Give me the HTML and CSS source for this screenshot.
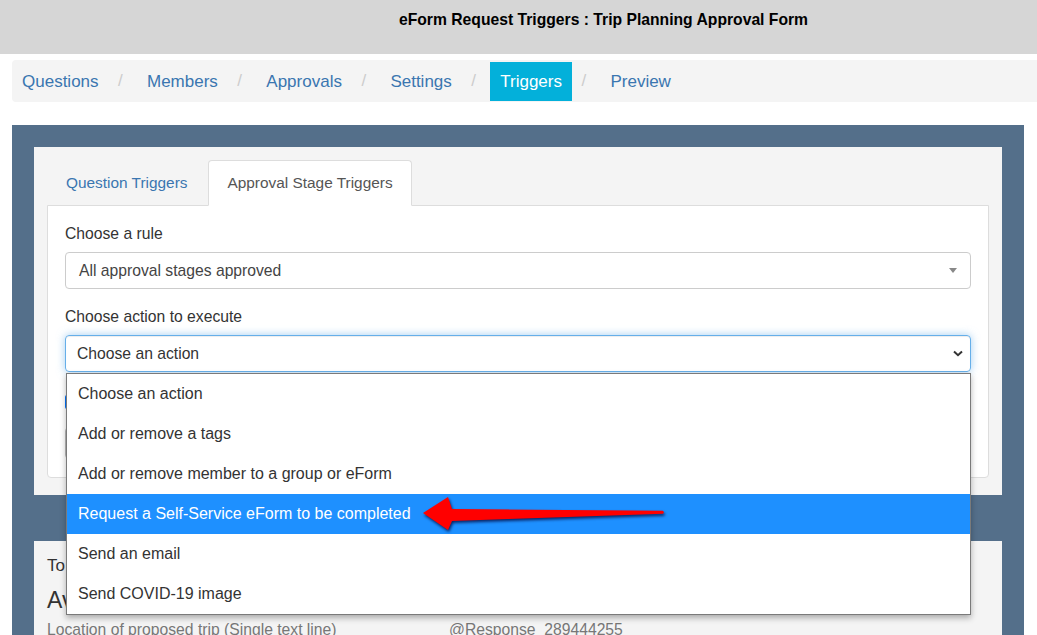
FILE: index.html
```html
<!DOCTYPE html>
<html lang="en">
<head>
    <meta charset="UTF-8">
    <meta name="viewport" content="width=device-width, initial-scale=1.0">
    <title>eForm Request Triggers</title>
    <link rel="stylesheet" href="styles.css">
</head>
<body>

    <header class="page-header">
        <h1 class="page-title">eForm Request Triggers : Trip Planning Approval Form</h1>
    </header>

    <ul class="crumbs">
        <li><a href="#">Questions</a></li>
        <li><a href="#">Members</a></li>
        <li><a href="#">Approvals</a></li>
        <li><a href="#">Settings</a></li>
        <li class="active"><a href="#">Triggers</a></li>
        <li><a href="#">Preview</a></li>
    </ul>

    <div class="board">
        <div class="card">
            <ul class="tabs">
                <li><a href="#">Question Triggers</a></li>
                <li class="active"><a href="#">Approval Stage Triggers</a></li>
            </ul>
            <div class="tab-pane">
                <div class="form-group">
                    <label>Choose a rule</label>
                    <div class="pick">
                        <span>All approval stages approved</span>
                        <span class="caret"></span>
                    </div>
                </div>
                <div class="form-group">
                    <label>Choose action to execute</label>
                    <div class="action-select">
                        <div class="select-box">
                            <span>Choose an action</span>
                            <svg class="chevron" width="10" height="7" viewBox="0 0 10 7">
                                <path d="M1 1.5 L5 5.2 L9 1.5" fill="none" stroke="#333" stroke-width="2"/>
                            </svg>
                        </div>
                        <ul class="options">
                            <li>Choose an action</li>
                            <li>Add or remove a tags</li>
                            <li>Add or remove member to a group or eForm</li>
                            <li class="hl">Request a Self-Service eForm to be completed
                                <svg class="pointer" width="250" height="40" viewBox="0 0 250 40">
                                    <polygon points="3,19 28,3 32,15 243,16.8 244,18.3 243,19.8 32,27 28,36" fill="#ff0000"/>
                                </svg>
                            </li>
                            <li>Send an email</li>
                            <li>Send COVID-19 image</li>
                        </ul>
                    </div>
                </div>
                <div class="check-row"><span class="checkbox"></span></div>
                <div class="input-box"></div>
            </div>
        </div>

        <div class="card lower">
            <p class="to">To</p>
            <h3 class="heading">Av</h3>
            <div class="field-row">
                <span>Location of proposed trip (Single text line)</span>
                <span>@Response_289444255</span>
            </div>
        </div>
    </div>

</body>
</html>
```

FILE: styles.css
```css
* {
    box-sizing: border-box;
}
body {
    margin: 0;
    font-family: "Liberation Sans", Arial, sans-serif;
    font-size: 15.7px;
    color: #333;
    height: 635px;
    overflow: hidden;
}
.page-header {
    background-color: #d6d6d6;
    height: 54px;
    padding: 11px 0 0 170px;
    text-align: center;
}
.page-title {
    margin: 0;
    font-size: 15.7px;
    font-weight: bold;
    line-height: 18px;
    color: #000;
}
.crumbs {
    display: flex;
    list-style: none;
    margin: 6px 0 0 12px;
    padding: 1px 0;
    height: 42px;
    background-color: #f4f4f4;
    border-radius: 4px 0 0 4px;
}
.crumbs li {
    display: flex;
    align-items: center;
    font-size: 17px;
}
.crumbs li + li::before {
    content: "/\00a0";
    padding: 0 9.5px;
    color: #ccc;
}
.crumbs a {
    display: block;
    padding: 0 10px;
    line-height: 39px;
    color: #3a76b0;
    text-decoration: none;
}
.crumbs .active a {
    background-color: #03b0da;
    color: white;
}
.board {
    background-color: #546f8a;
    margin: 23px 13px 0 12px;
    padding: 22px 22px 40px;
}
.card {
    background-color: #f4f4f4;
    padding: 13px 13px 17px;
}
.card + .card {
    margin-top: 46px;
}
/* tabs */
.tabs {
    display: flex;
    list-style: none;
    margin: 0;
    padding: 0;
}
.tabs li {
    margin-right: 2px;
    margin-bottom: -1px;
    position: relative;
}
.tabs a {
    display: block;
    padding: 0 18px;
    line-height: 44px;
    font-size: 15.4px;
    border: 1px solid transparent;
    border-radius: 4px 4px 0 0;
    color: #3a76b0;
    text-decoration: none;
}
.tabs .active a {
    background-color: white;
    border-color: #ddd;
    border-bottom-color: white;
    color: #555;
}
.tab-pane {
    background-color: white;
    border: 1px solid #ddd;
    border-radius: 0 0 4px 4px;
    padding: 18px 17px;
}
.form-group {
    margin-bottom: 18px;
}
.form-group label {
    display: block;
    line-height: 20px;
    margin-bottom: 8px;
}
.pick {
    display: flex;
    justify-content: space-between;
    align-items: center;
    height: 37px;
    padding: 0 13px;
    border: 1px solid #ccc;
    border-radius: 4px;
    color: #444;
}
.caret {
    width: 0;
    height: 0;
    border-style: solid;
    border-width: 5px 4px 0;
    border-color: #888 transparent transparent;
}
.action-select {
    position: relative;
}
.select-box {
    display: flex;
    justify-content: space-between;
    align-items: center;
    height: 37px;
    padding: 0 7px 0 11px;
    border: 1px solid #66afe9;
    border-radius: 4px;
    box-shadow: inset 0 1px 1px rgba(0, 0, 0, 0.075), 0 0 8px rgba(102, 175, 233, 0.6);
    color: #333;
}
.options {
    position: absolute;
    top: calc(100% + 1px);
    left: 1px;
    right: 0;
    z-index: 5;
    list-style: none;
    margin: 0;
    padding: 0;
    background-color: white;
    border: 1px solid #7a7a7a;
    box-shadow: 0 3px 6px rgba(0, 0, 0, 0.3);
}
.options li {
    height: 40px;
    line-height: 40px;
    padding-left: 11px;
    font-size: 16px;
    color: #333;
}
.options .hl {
    position: relative;
    background-color: #1e90ff;
    color: white;
}
.pointer {
    position: absolute;
    left: 353px;
    top: 0;
    filter: drop-shadow(1px 2px 1.5px rgba(0, 0, 50, 0.75));
}
.check-row {
    display: flex;
    align-items: center;
    height: 24px;
    margin-bottom: 13px;
}
.checkbox {
    width: 14px;
    height: 14px;
    background-color: #0075ff;
    border-radius: 2px;
}
.input-box {
    height: 32px;
    border: 1px solid #bbb;
    border-radius: 4px;
}
/* lower card */
.lower {
    padding: 14px 13px 60px;
}
.to {
    margin: 0;
    font-size: 17px;
    line-height: 22px;
}
.heading {
    margin: 9px 0 6px;
    font-size: 23px;
    font-weight: normal;
    line-height: 28px;
}
.field-row {
    display: grid;
    grid-template-columns: 402px 1fr;
    line-height: 20px;
    color: #777;
}
```
